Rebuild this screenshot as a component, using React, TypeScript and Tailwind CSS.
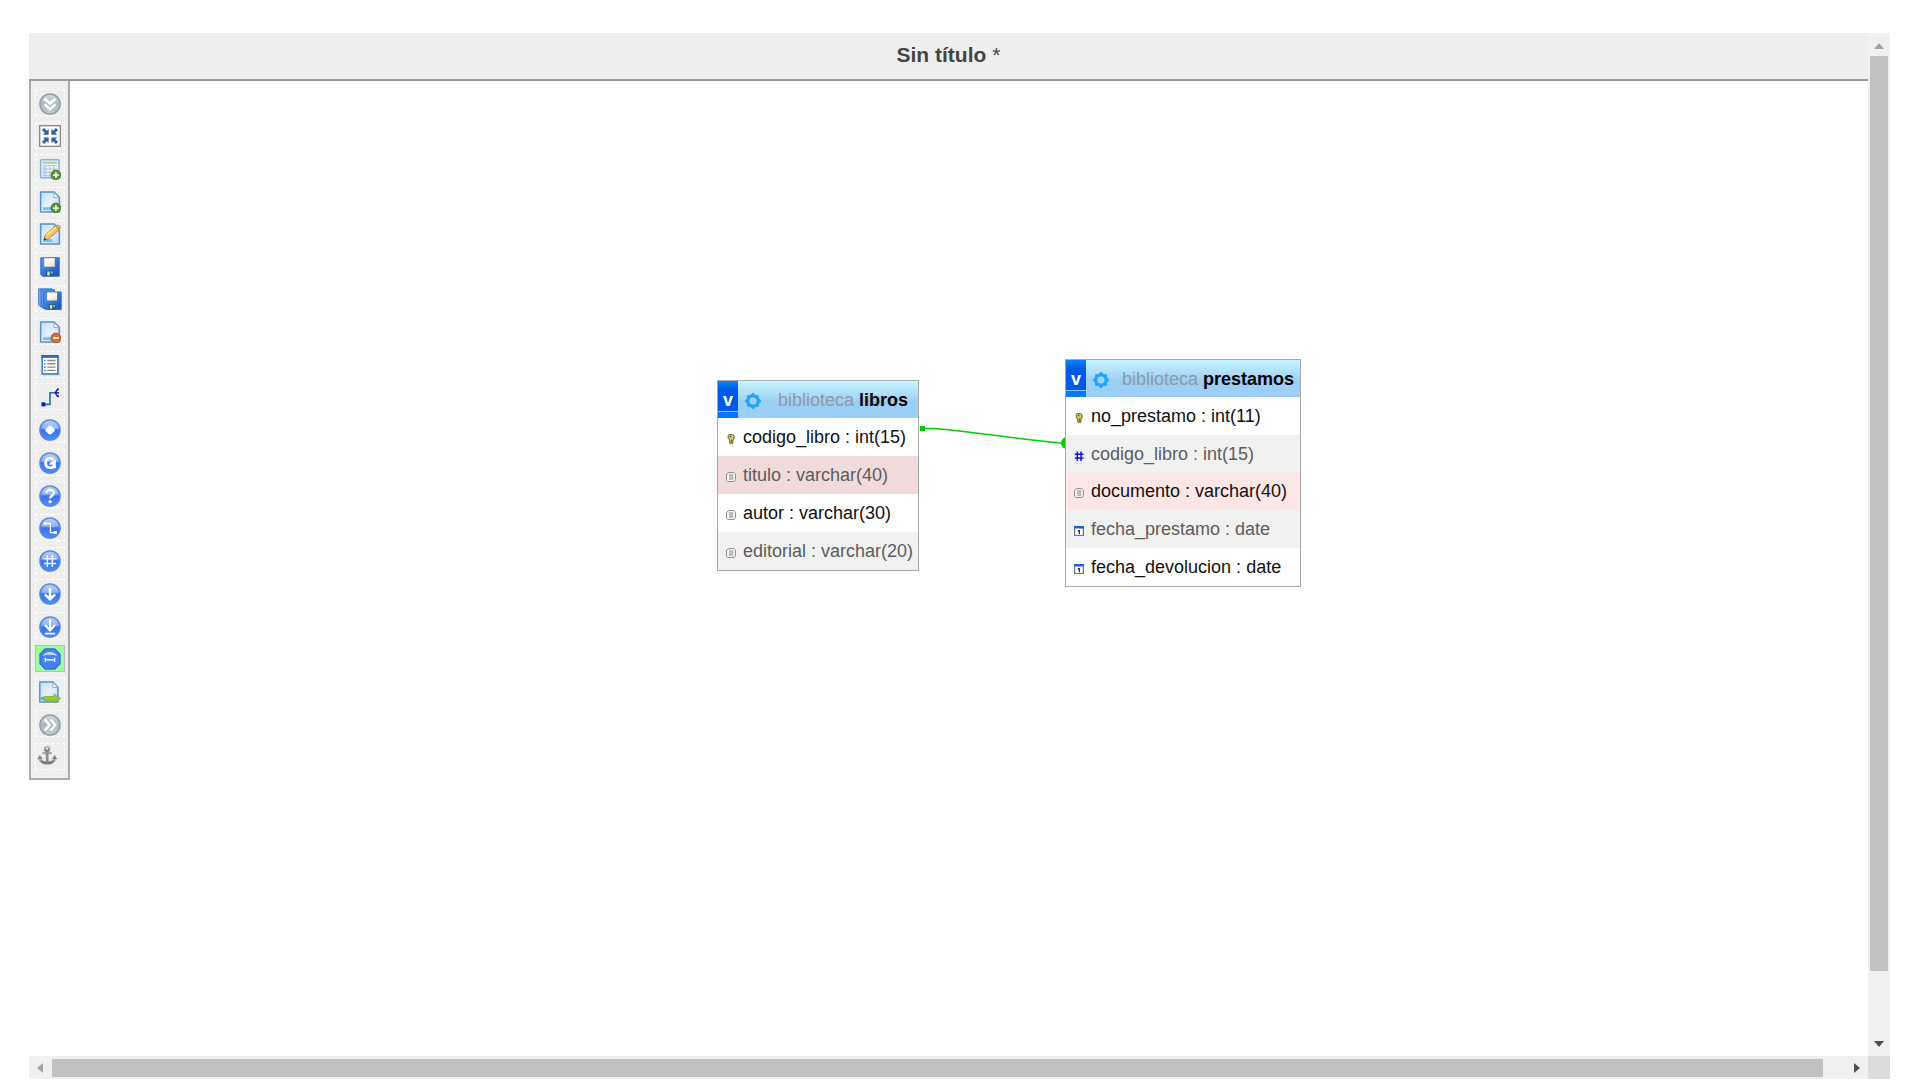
import type { ReactNode } from "react";

const Icon = ({ children }: { children: ReactNode }) => (
  <svg viewBox="0 0 16 16" className="relative top-px block size-[22px] shrink-0" aria-hidden="true">
    {children}
  </svg>
);

const Defs = () => (
  <svg className="absolute size-0" aria-hidden="true">
    <defs>
      <linearGradient id="orb" x1="0" y1="0" x2="0" y2="1">
        <stop offset="0" stopColor="#a9c6fb" />
        <stop offset="0.42" stopColor="#6f9ff6" />
        <stop offset="0.5" stopColor="#3a74ec" />
        <stop offset="1" stopColor="#4a8bff" />
      </linearGradient>
      <linearGradient id="greyOrb" x1="0" y1="0" x2="0" y2="1">
        <stop offset="0" stopColor="#d3dde1" />
        <stop offset="0.5" stopColor="#a9b9c0" />
        <stop offset="1" stopColor="#c3ced3" />
      </linearGradient>
      <linearGradient id="paper" x1="0" y1="0" x2="1" y2="1">
        <stop offset="0" stopColor="#c3dbf6" />
        <stop offset="0.5" stopColor="#e4f0fc" />
        <stop offset="1" stopColor="#b5d6f6" />
      </linearGradient>
      <linearGradient id="disk" x1="0" y1="0" x2="1" y2="1">
        <stop offset="0" stopColor="#5c9cf0" />
        <stop offset="1" stopColor="#1550b8" />
      </linearGradient>
      <linearGradient id="label" x1="0" y1="0" x2="1" y2="1">
        <stop offset="0.3" stopColor="#ffffff" />
        <stop offset="1" stopColor="#fbd9a8" />
      </linearGradient>
      <linearGradient id="anchorGrey" x1="0" y1="0" x2="0" y2="1">
        <stop offset="0" stopColor="#c4c4c4" />
        <stop offset="1" stopColor="#6f6f6f" />
      </linearGradient>
    </defs>
  </svg>
);

const Orb = ({ children }: { children: ReactNode }) => (
  <Icon>
    <circle cx="8" cy="8" r="7.4" fill="url(#orb)" stroke="#5d86cf" strokeWidth="0.9" />
    <path d="M2 6.6C3 3.4 5.2 1.9 8 1.9s5 1.5 6 4.7C12 7.6 4 7.6 2 6.6Z" fill="#fff" opacity="0.22" />
    {children}
  </Icon>
);

const GreyOrb = ({ children }: { children: ReactNode }) => (
  <Icon>
    <circle cx="8" cy="8" r="7.3" fill="url(#greyOrb)" stroke="#8d9fa7" strokeWidth="1.1" />
    {children}
  </Icon>
);

const Page = ({ children }: { children?: ReactNode }) => (
  <>
    <path d="M1.2.8h9.8l3.8 3.8v10.6H1.2Z" fill="url(#paper)" stroke="#5b8fd0" strokeWidth="1.1" strokeLinejoin="round" />
    <path d="M10.8 1v3.8h3.8Z" fill="#fff" stroke="#7ba7dc" strokeWidth="0.7" />
    <path d="M2.8 11.8h7v2h-7Z" fill="#6cc0f5" />
    {children}
  </>
);

const Plus = () => (
  <>
    <circle cx="12.3" cy="12.4" r="3.6" fill="#5d9232" stroke="#3f7420" strokeWidth="0.6" />
    <path d="M12.3 10.4v4M10.3 12.4h4" stroke="#fff" strokeWidth="1.3" />
  </>
);

const Floppy = () => (
  <>
    <path d="M1.3 1.3h13.4v13.4H2.6L1.3 13.4Z" fill="url(#disk)" stroke="#2c68c8" strokeWidth="0.7" />
    <path d="M3.8 1.6h7.7v6.2H3.8Z" fill="url(#label)" />
    <path d="M5 10.6h5.6v4H5Z" fill="#2a5b75" />
    <path d="M6 11.2h1.8v2.9H6Z" fill="#b9e3dc" />
    <path d="M8.6 11.2h1.4v1.6H8.6Z" fill="#7fc0b4" />
  </>
);

type Tool = { name: string; icon: ReactNode; active?: boolean };

const tools: Tool[] = [
  {
    name: "Mostrar/ocultar lista de tablas",
    icon: (
      <GreyOrb>
        <path d="M4 4.2 8 7.6l4-3.4M4 8.2l4 3.4 4-3.4" fill="none" stroke="#fff" strokeWidth="1.9" />
      </GreyOrb>
    ),
  },
  {
    name: "Ver en pantalla completa",
    icon: (
      <Icon>
        <rect x="0.5" y="0.5" width="15" height="15" fill="#fff" stroke="#8b8b85" strokeWidth="1" />
        <path
          d="M7 2.8V7H2.8l1.3-1.3-2-2L3.7 2.1l2 2ZM9 2.8V7h4.2l-1.3-1.3 2-2-1.6-1.6-2 2ZM7 13.2V9H2.8l1.3 1.3-2 2 1.6 1.6 2-2ZM9 13.2V9h4.2l-1.3 1.3 2 2-1.6 1.6-2-2Z"
          fill="#2f62ad"
        />
      </Icon>
    ),
  },
  {
    name: "Agregar tablas",
    icon: (
      <Icon>
        <rect x="1.2" y="1.2" width="13.4" height="13.2" rx="0.8" fill="#f4f8fd" stroke="#86aee2" strokeWidth="1.1" />
        <path d="M2.4 2.6h11v1.6h-11Z" fill="#a9d192" />
        <path d="M2.6 5.4h2v8h-2Z" fill="#cfdcee" />
        <path d="M2.6 5.6h10.8M2.6 8h10.8M2.6 10.4h10.8M5 5.4v8M7.8 5.4v8M10.6 5.4v8M2.6 12.9h8" fill="none" stroke="#a8bfdf" strokeWidth="0.7" />
        <Plus />
      </Icon>
    ),
  },
  { name: "Página nueva", icon: <Icon><Page><Plus /></Page></Icon> },
  {
    name: "Editar página",
    icon: (
      <Icon>
        <Page>
          <path d="m3.6 12.3.9-3.6L12 2.3l2.7 2.6-7.6 6.6Z" fill="#f3c55f" stroke="#b48338" strokeWidth="0.7" />
          <path d="m5.2 9.1 7.4-6.2" stroke="#fdeaa8" strokeWidth="1" />
          <path d="m12 2.3 1.3-.8q1.9-.2 2.4 1.9l-1 1.5Z" fill="#e8a46a" stroke="#b48338" strokeWidth="0.5" />
          <path d="m3.4 12.6.6-2 1.5 1.5Z" fill="#333" />
        </Page>
      </Icon>
    ),
  },
  { name: "Guardar página", icon: <Icon><Floppy /></Icon> },
  {
    name: "Guardar página como",
    icon: (
      <svg viewBox="0 0 18 17" className="relative top-px block h-[23px] w-6 shrink-0" aria-hidden="true">
        <path d="M.5.5h10V14H1.8L.5 12.7Z" fill="#7fb0f3" stroke="#3c78d2" strokeWidth="0.7" />
        <path d="M2.3 1.2h10V15H3.6L2.3 13.7Z" fill="#5a96ec" stroke="#2c68c8" strokeWidth="0.7" />
        <g transform="translate(3 1.6) scale(0.98)">
          <Floppy />
        </g>
      </svg>
    ),
  },
  {
    name: "Borrar páginas",
    icon: (
      <Icon>
        <Page>
          <circle cx="12.3" cy="12.4" r="3.6" fill="#e2672a" stroke="#b84a16" strokeWidth="0.6" />
          <path d="M10.3 12.4h4" stroke="#fff" strokeWidth="1.4" />
        </Page>
      </Icon>
    ),
  },
  {
    name: "Esquema relacional",
    icon: (
      <Icon>
        <path d="M3 2h12v13.5H3Z" fill="#c9c9c9" />
        <rect x="2.3" y="1.3" width="11.4" height="13.2" fill="#fff" stroke="#3a76cc" strokeWidth="1.1" />
        <path d="M1.8.8h12.4v2H1.8Z" fill="#2c68c4" />
        <path d="M6 4.7h6M6 7.1h6M6 9.5h6M6 11.9h6" stroke="#8b8b8b" strokeWidth="1" />
        <path d="M3.7 4.7h1.2M3.7 7.1h1.2M3.7 9.5h1.2M3.7 11.9h1.2" stroke="#3aa3d8" strokeWidth="1.2" />
      </Icon>
    ),
  },
  {
    name: "Crear relación",
    icon: (
      <Icon>
        <path d="M3.5 12.6H8V4.2h4" fill="none" stroke="#1678ac" strokeWidth="1.2" />
        <path d="M1.8 11.1h2.8v3H1.8Z" fill="#2018b8" />
        <path d="M14.5 1.7h-1L11.8 4.2l1.7 2.6h1M12 4.2h2.5" fill="none" stroke="#2018b8" strokeWidth="1.1" />
      </Icon>
    ),
  },
  {
    name: "Elegir la columna a mostrar",
    icon: <Orb><path d="M8 4.7 9.2 5.3 11.3 7.3V8.7L9.2 10.7 8 11.3 6.8 10.7 4.7 8.7V7.3L6.8 5.3Z" fill="#fff" /></Orb>,
  },
  {
    name: "Recargar",
    icon: (
      <Orb>
        <path d="M10.6 5.6C8.4 3.4 4.8 4.8 4.8 8.1c0 3.5 4.2 4.3 6.1 2.3" fill="none" stroke="#fff" strokeWidth="2" />
        <path d="M7.6 8.2 12.3 5.2v6.6h-2.2V9.2H7.6Z" fill="#fff" />
      </Orb>
    ),
  },
  {
    name: "Ayuda",
    icon: (
      <Orb>
        <path d="M5.5 5.9c0-3 5.3-3 5.3-.2 0 2-2.6 1.9-2.6 4" fill="none" stroke="#fff" strokeWidth="1.8" />
        <circle cx="8.1" cy="12.1" r="1.2" fill="#fff" />
      </Orb>
    ),
  },
  {
    name: "Enlaces angulares",
    icon: (
      <Orb>
        <path d="M5 4.7h3.3V11.4h3" fill="none" stroke="#fff" strokeWidth="1" />
        <path d="M3.4 3.6h2.2v2.2H3.4ZM10.7 10.1h2.3v2.3h-2.3Z" fill="#fff" />
      </Orb>
    ),
  },
  {
    name: "Ajustar a la cuadrícula",
    icon: <Orb><path d="M6.1 3.6v8.8M9.7 3.6v8.8M3.6 6.3h8.8M3.6 9.8h8.8" stroke="#fff" strokeWidth="1" /></Orb>,
  },
  {
    name: "Grande/pequeño",
    icon: <Orb><path d="M8 3.8v8M4.3 8.2 8 11.9l3.7-3.7" fill="none" stroke="#fff" strokeWidth="1.8" /></Orb>,
  },
  {
    name: "Invertir grande/pequeño",
    icon: (
      <Orb>
        <path d="M8 2.8v8M4.3 6.6 8 10.4l3.7-3.8" fill="none" stroke="#fff" strokeWidth="1.6" />
        <path d="M4.3 12.8h7.4" stroke="#fff" strokeWidth="1.2" />
      </Orb>
    ),
  },
  {
    name: "Mostrar líneas de relación",
    active: true,
    icon: (
      <Icon>
        <path d="M4.5.7h7l3.8 3.8v7l-3.8 3.8h-7L.7 11.5v-7Z" fill="#4581f3" stroke="#3c6cd0" strokeWidth="0.9" />
        <path d="M2.8 5.6C4.6 2 11.400 2 13.200 5.600 10 4.600 6 4.600 2.800 5.600Z" fill="#c5dafd" />
        <path d="M4.500 8.500h7M4.600 7v3M11.400 7v3" stroke="#fff" strokeWidth="1" />
      </Icon>
    ),
  },
  {
    name: "Exportar esquema",
    icon: (
      <Icon>
        <path d="M.6.7h9.5l3.7 3.8V15.3H.6Z" fill="url(#paper)" stroke="#5b8fd0" strokeWidth="1.1" strokeLinejoin="round" />
        <path d="M10 .9v3.800h3.700Z" fill="#fff" stroke="#7ba7dc" strokeWidth="0.7" />
        <path d="M1.500 11.500h3v2.500h-3Z" fill="#46aee8" />
        <path d="M4 11.300h7V9.600l4.700 3.200L11 16V14.300H4Z" fill="#9cc93c" stroke="#7fae2c" strokeWidth="0.6" />
      </Icon>
    ),
  },
  {
    name: "Mover menú",
    icon: (
      <GreyOrb>
        <path d="M4.200 4 7.600 8l-3.400 4M8.400 4l3.400 4-3.400 4" fill="none" stroke="#fff" strokeWidth="1.9" />
      </GreyOrb>
    ),
  },
  {
    name: "Fijar texto",
    icon: (
      <svg viewBox="0 0 16 16" className="mr-1 mb-0.5 block size-[21px] shrink-0" aria-hidden="true">
        <g fill="none" stroke="url(#anchorGrey)">
          <circle cx="7.700" cy="2.900" r="1.600" strokeWidth="1.600" />
          <path d="M2 9.700c.8 5.400 10.800 5.400 11.700 0" strokeWidth="2.200" />
        </g>
        <path d="M4 5.200h7.400v1.800H4Z" fill="#aaa" />
        <path d="M6.700 4.400h2.100v9.800H6.700Z" fill="#8c8c8c" />
        <path d="m.2 10.900 1.900-3.300 2.300 2.900ZM15.500 10.900l-1.900-3.300-2.300 2.900Z" fill="#858585" />
      </svg>
    ),
  },
];

type Kind = "key" | "text" | "number" | "date";

const KindIcon = ({ kind }: { kind: Kind }) => (
  <svg viewBox="0 0 10 10" className="relative top-0.5 block size-2.5 shrink-0" aria-hidden="true">
    {kind === "key" && (
      <>
        <path d="M3 .4h3.600L8 1.700v3.200L6.900 6v3.200L5.500 9.900 3.700 8.900V5.700L2.200 4.600V1.500Z" fill="#ddd04a" stroke="#4c4c38" strokeWidth="0.9" />
        <path d="M3.800 1.800h1.600v1.400H3.800ZM5.200 5.400h.9v3.400h-.9Z" fill="#4c4c38" />
      </>
    )}
    {kind === "text" && (
      <>
        <path d="M2.900.5h4.900l1.700 1.700v5.300L8.200 9.500H1.500L.5 8.500V2.300Z" fill="#f4f4f4" stroke="#858585" strokeWidth="0.9" strokeLinejoin="round" />
        <path d="M3 3h4.300M3 5h4.300M3 7h4.300" stroke="#6a6a6a" strokeWidth="0.8" />
      </>
    )}
    {kind === "number" && <path d="M3.300.4v9.600M7 .4v9.600M.8 3.300h8.700M.8 7h8.700" stroke="#1212f0" strokeWidth="1.5" />}
    {kind === "date" && (
      <>
        <rect x="0.6" y="0.6" width="8.8" height="8.900" fill="#fff" stroke="#6f7580" strokeWidth="1.2" />
        <path d="M0 0h10v2.500H0Z" fill="#1c62e8" />
        <path d="M4.200 3.900h1.700V8.300H4.700V5.600H3.600Z" fill="#222" />
      </>
    )}
  </svg>
);

type Column = { name: string; type: string; kind: Kind; tone: string };

type DbTable = { name: string; place: string; columns: Column[] };

const plain = "bg-white text-[#111]";
const shaded = "bg-[#f1f1f1] text-[#5c5c5c]";

const tables: DbTable[] = [
  {
    name: "libros",
    place: "left-[688px] top-[299px] h-[191px]",
    columns: [
      { name: "codigo_libro", type: "int(15)", kind: "key", tone: plain },
      { name: "titulo", type: "varchar(40)", kind: "text", tone: "bg-[#f1dada] text-[#5c5c5c]" },
      { name: "autor", type: "varchar(30)", kind: "text", tone: plain },
      { name: "editorial", type: "varchar(20)", kind: "text", tone: shaded },
    ],
  },
  {
    name: "prestamos",
    place: "left-[1036px] top-[278px] h-[228px]",
    columns: [
      { name: "no_prestamo", type: "int(11)", kind: "key", tone: plain },
      { name: "codigo_libro", type: "int(15)", kind: "number", tone: shaded },
      { name: "documento", type: "varchar(40)", kind: "text", tone: "bg-[#ffe6e6] text-[#111]" },
      { name: "fecha_prestamo", type: "date", kind: "date", tone: shaded },
      { name: "fecha_devolucion", type: "date", kind: "date", tone: plain },
    ],
  },
];

const TableCard = ({ table }: { table: DbTable }) => (
  <div className={`absolute border border-[#aaa] ${table.place}`}>
    <table className="h-full border-collapse whitespace-nowrap text-[18px] leading-6">
      <thead>
        <tr className="bg-linear-to-b from-[#c9f5ff] to-[#9bcff5] to-55%">
          <th className="p-0 font-normal">
            <div className="flex h-[37px] items-stretch">
              <button
                type="button"
                aria-label={`Contraer ${table.name}`}
                className="flex w-5 flex-col bg-[#0b76f2] text-[18px] font-bold text-white"
              >
                <span className="flex w-full grow items-end justify-center border-b border-[#8cc4ff] bg-linear-to-b from-[#0f80f8] to-[#005ae6] to-30% leading-[22px]">
                  v
                </span>
                <span className="h-1.5" />
              </button>
              <button type="button" aria-label={`Estructura de ${table.name}`} className="flex w-[30px] items-center justify-center">
                <svg viewBox="0 0 18 18" className="relative top-px size-[18px]" aria-hidden="true">
                  <path
                    d="M9 .5 11.500 2.900 14.800 3.200 15.100 6.500 17.500 9 15.100 11.500 14.800 14.800 11.500 15.100 9 17.500 6.500 15.100 3.200 14.800 2.900 11.500.5 9 2.900 6.500 3.200 3.200 6.500 2.900ZM9 5.400a3.600 3.600 0 1 0 0 7.200 3.600 3.600 0 0 0 0-7.200Z"
                    fill="#22a4f8"
                    fillRule="evenodd"
                  />
                </svg>
              </button>
              <span className="flex grow items-center justify-center gap-[5px] px-1.5">
                <span className="text-[#8f9aa2]">biblioteca</span>
                <span className="font-bold text-black">{table.name}</span>
              </span>
            </div>
          </th>
        </tr>
      </thead>
      <tbody>
        {table.columns.map((c) => (
          <tr key={c.name} className={c.tone}>
            <td className="p-0">
              <div className="flex items-center gap-[7px] pr-[5px] pl-2">
                <KindIcon kind={c.kind} />
                <span>
                  {c.name} : {c.type}
                </span>
              </div>
            </td>
          </tr>
        ))}
      </tbody>
    </table>
  </div>
);

export default function App() {
  return (
    <div className="grid h-screen grid-cols-[1fr_22px] grid-rows-[1fr_23px] bg-white pr-[30px] pl-[29px] pt-[33px] pb-px font-['Liberation_Sans',Arial,sans-serif]">
      <Defs />
      <main className="flex min-h-0 min-w-0 flex-col">
        <header className="flex h-12 shrink-0 items-center justify-center border-b-2 border-[#999] bg-[#eee] pb-0.5">
          <h1 className="flex gap-[6px] text-[21px] leading-7 font-bold text-[#444]">
            Sin título <span className="text-[21px] font-normal">*</span>
          </h1>
        </header>
        <div className="relative min-h-0 grow">
          <nav
            aria-label="Herramientas del diseñador"
            className="flex h-[699px] w-[41px] flex-col items-center justify-between border-2 border-t-0 border-[#aaa] bg-[#eee] pt-2 pb-2"
          >
            {tools.map((t) => (
              <button
                key={t.name}
                type="button"
                title={t.name}
                aria-label={t.name}
                className={`flex h-[27px] w-[30px] items-center justify-center border ${
                  t.active ? "border-[#bbb] bg-[#99ff99]" : "border-dashed border-white"
                }`}
              >
                {t.icon}
              </button>
            ))}
          </nav>
          <svg className="absolute top-[340px] left-[889px] h-8 w-[154px]" viewBox="0 0 154 32" aria-hidden="true">
            <path d="M2 5h5v5H2Z" fill="#00cc00" />
            <path d="M4 7.500h12C30 8 130 21.500 145 22h4" fill="none" stroke="#00cc00" strokeWidth="1.500" />
            <circle cx="149" cy="22" r="6" fill="#00cc00" />
          </svg>
          {tables.map((t) => (
            <TableCard key={t.name} table={t} />
          ))}
        </div>
      </main>
      <div className="flex flex-col items-center bg-[#f0f0f0]">
        <svg viewBox="0 0 10 6" className="mt-2.5 mb-[7px] h-1.5 w-2.5" aria-hidden="true">
          <path d="M0 6 5 0l5 6Z" fill="#a3a3a3" />
        </svg>
        <div className="w-[18px] grow bg-[#c1c1c1]" />
        <svg viewBox="0 0 10 6" className="mt-[70px] mb-[9px] h-1.5 w-2.5" aria-hidden="true">
          <path d="M0 0h10L5 6Z" fill="#505050" />
        </svg>
      </div>
      <div className="flex items-center bg-[#f0f0f0]">
        <svg viewBox="0 0 6 10" className="mr-[9px] ml-2 h-2.5 w-1.5" aria-hidden="true">
          <path d="M6 0v10L0 5Z" fill="#a3a3a3" />
        </svg>
        <div className="h-[18px] grow bg-[#c1c1c1]" />
        <svg viewBox="0 0 6 10" className="mr-2 ml-[31px] h-2.5 w-1.5" aria-hidden="true">
          <path d="M0 0v10l6-5Z" fill="#505050" />
        </svg>
      </div>
      <div className="bg-[#dcdcdc]" />
    </div>
  );
}
